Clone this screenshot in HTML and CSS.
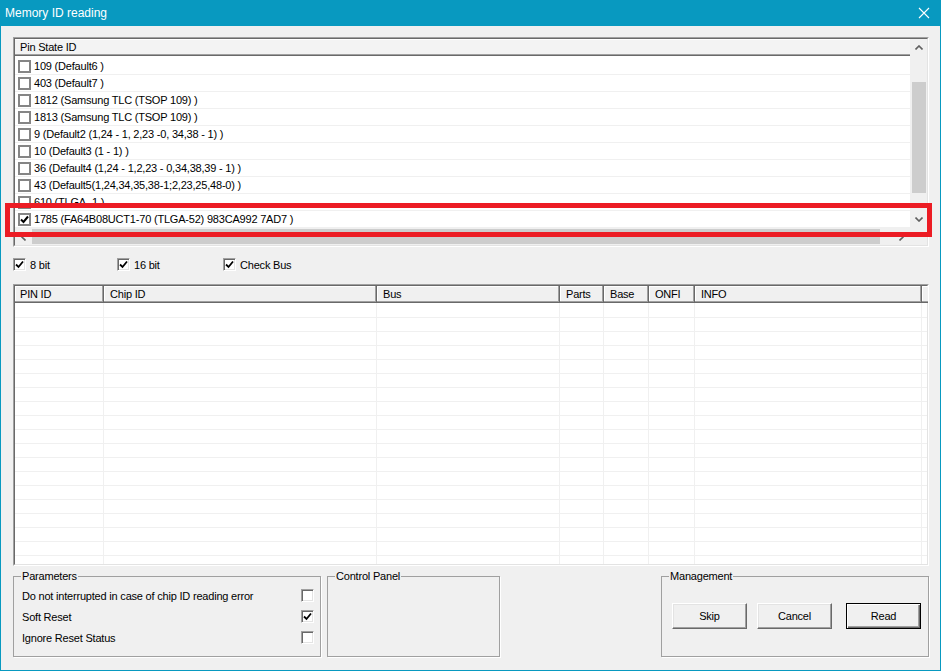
FILE: index.html
```html
<!DOCTYPE html>
<html lang="en">
<head>
    <meta charset="UTF-8">
    <title>Memory ID reading</title>
    <link rel="stylesheet" href="styles.css">
</head>
<body>
<div class="window">
    <div class="titlebar">
        <span class="title">Memory ID reading</span>
        <svg class="close" width="12" height="12" viewBox="0 0 12 12">
            <path d="M1 1 L11 11 M11 1 L1 11" stroke="#fff" stroke-width="1.1" fill="none"/>
        </svg>
    </div>

    <div class="client">
        <!-- pin state list -->
        <div class="sunken listbox">
            <div class="sunken-in list-grid">
                <div class="list-main">
                    <div class="list-head">Pin State ID</div>
                    <div class="row"><span class="lcb"></span>109 (Default6 )</div>
                    <div class="row"><span class="lcb"></span>403 (Default7 )</div>
                    <div class="row"><span class="lcb"></span>1812 (Samsung TLC (TSOP 109) )</div>
                    <div class="row"><span class="lcb"></span>1813 (Samsung TLC (TSOP 109) )</div>
                    <div class="row"><span class="lcb"></span>9 (Default2 (1,24 - 1, 2,23 -0, 34,38 - 1) )</div>
                    <div class="row"><span class="lcb"></span>10 (Default3 (1 - 1) )</div>
                    <div class="row"><span class="lcb"></span>36 (Default4 (1,24 - 1,2,23 - 0,34,38,39 - 1) )</div>
                    <div class="row"><span class="lcb"></span>43 (Default5(1,24,34,35,38-1;2,23,25,48-0) )</div>
                    <div class="row"><span class="lcb"></span>610 (TLGA_1 )</div>
                    <div class="row"><span class="lcb"><svg width="9" height="9" viewBox="0 0 9 9"><path d="M1 4.5 L3.5 7 L8 1.5" stroke="#000" stroke-width="2" fill="none"/></svg></span>1785 (FA64B08UCT1-70 (TLGA-52) 983CA992 7AD7 )</div>
                </div>
                <div class="vscroll">
                    <div class="sbtn"><svg width="8" height="5" viewBox="0 0 8 5"><path d="M0.5 4.5 L4 1 L7.5 4.5" stroke="#606060" stroke-width="1.6" fill="none"/></svg></div>
                    <div class="vtrack"><div class="vthumb"></div></div>
                    <div class="sbtn"><svg width="8" height="5" viewBox="0 0 8 5"><path d="M0.5 0.5 L4 4 L7.5 0.5" stroke="#606060" stroke-width="1.6" fill="none"/></svg></div>
                </div>
                <div class="hscroll">
                    <div class="sbtn hbtn"><svg width="5" height="8" viewBox="0 0 5 8"><path d="M4.5 0.5 L1 4 L4.5 7.5" stroke="#606060" stroke-width="1.6" fill="none"/></svg></div>
                    <div class="htrack"><div class="hthumb"></div></div>
                    <div class="sbtn hbtn"><svg width="5" height="8" viewBox="0 0 5 8"><path d="M0.5 0.5 L4 4 L0.5 7.5" stroke="#606060" stroke-width="1.6" fill="none"/></svg></div>
                </div>
                <div class="corner"></div>
            </div>
        </div>
        <div class="red-mark"></div>

        <!-- bus options -->
        <div class="opts">
            <label class="opt w1"><span class="cb"><svg width="9" height="9" viewBox="0 0 9 9"><path d="M1 4.5 L3.5 7 L8 1.5" stroke="#000" stroke-width="1.8" fill="none"/></svg></span>8 bit</label>
            <label class="opt w2"><span class="cb"><svg width="9" height="9" viewBox="0 0 9 9"><path d="M1 4.5 L3.5 7 L8 1.5" stroke="#000" stroke-width="1.8" fill="none"/></svg></span>16 bit</label>
            <label class="opt"><span class="cb"><svg width="9" height="9" viewBox="0 0 9 9"><path d="M1 4.5 L3.5 7 L8 1.5" stroke="#000" stroke-width="1.8" fill="none"/></svg></span>Check Bus</label>
        </div>

        <!-- result table -->
        <div class="sunken table">
            <div class="sunken-in table-in">
                <div class="thead">
                    <div class="th c1">PIN ID</div>
                    <div class="th c2">Chip ID</div>
                    <div class="th c3">Bus</div>
                    <div class="th c4">Parts</div>
                    <div class="th c5">Base</div>
                    <div class="th c6">ONFI</div>
                    <div class="th c7">INFO</div>
                    <div class="th cf"></div>
                </div>
                <div class="tbody">
                    <div class="tcol c1"></div>
                    <div class="tcol c2"></div>
                    <div class="tcol c3"></div>
                    <div class="tcol c4"></div>
                    <div class="tcol c5"></div>
                    <div class="tcol c6"></div>
                    <div class="tcol c7"></div>
                    <div class="tcol cf"></div>
                </div>
            </div>
        </div>

        <!-- bottom groups -->
        <div class="bottom">
            <fieldset class="grp params">
                <legend>Parameters</legend>
                <div class="prow">Do not interrupted in case of chip ID reading error<span class="cb"></span></div>
                <div class="prow">Soft Reset<span class="cb"><svg width="9" height="9" viewBox="0 0 9 9"><path d="M1 4.5 L3.5 7 L8 1.5" stroke="#000" stroke-width="1.8" fill="none"/></svg></span></div>
                <div class="prow">Ignore Reset Status<span class="cb"></span></div>
            </fieldset>
            <fieldset class="grp control">
                <legend>Control Panel</legend>
            </fieldset>
            <fieldset class="grp manage">
                <legend>Management</legend>
                <div class="btns">
                    <button class="btn">Skip</button>
                    <button class="btn cancel">Cancel</button>
                    <button class="btn def">Read</button>
                </div>
            </fieldset>
        </div>
    </div>
</div>
</body>
</html>
```

FILE: styles.css
```css
*{
    margin: 0;
    padding: 0;
    box-sizing: border-box;
}
body{
    width: 941px;
    height: 671px;
    overflow: hidden;
    background-color: #f0f0f0;
    color: #000;
    font-family: "Liberation Sans", Arial, sans-serif;
    font-size: 11px;
    letter-spacing: -0.2px;
}
.window{
    width: 941px;
    height: 671px;
    display: flex;
    flex-direction: column;
}
.titlebar{
    height: 26px;
    flex: none;
    background-color: #0899c0;
    color: #fff;
    display: flex;
    align-items: center;
    justify-content: space-between;
    padding: 0 11px 0 5px;
    font-size: 12px;
    letter-spacing: 0;
}
.client{
    flex: 1;
    position: relative;
    display: flex;
    flex-direction: column;
    border: 1px solid #0899c0;
    border-top: none;
    padding: 11px 11px 0 12px;
}

/* sunken 3d frame */
.sunken{
    border: 1px solid;
    border-color: #a0a0a0 #fff #fff #a0a0a0;
}
.sunken-in{
    height: 100%;
    border: 1px solid;
    border-color: #696969 #e3e3e3 #e3e3e3 #696969;
    background-color: #fff;
}

/* list */
.listbox{
    height: 210px;
    flex: none;
}
.list-grid{
    display: grid;
    grid-template-columns: 1fr 17px;
    grid-template-rows: 1fr 17px;
}
.list-main{
    overflow: hidden;
}
.list-head{
    height: 19px;
    line-height: 17px;
    padding-left: 5px;
    background-color: #f3f3f3;
    border-bottom: 2px solid #fff;
    box-shadow: inset 0 -1px #696969, inset 0 -2px #a0a0a0, inset 0 1px #fff;
}
.row{
    height: 17px;
    display: flex;
    align-items: center;
    gap: 3px;
    padding-left: 3px;
    border-bottom: 1px solid #f0f0f0;
    white-space: nowrap;
}
.lcb{
    width: 13px;
    height: 13px;
    flex: none;
    border: 2px solid #858585;
    background-color: #fff;
    display: flex;
    align-items: center;
    justify-content: center;
}
.vscroll{
    background-color: #f0f0f0;
    display: flex;
    flex-direction: column;
}
.sbtn{
    height: 17px;
    flex: none;
    display: flex;
    align-items: center;
    justify-content: center;
}
.vtrack{
    flex: 1;
    padding-top: 26px;
}
.vthumb{
    height: 111px;
    margin: 0 1px 0 2px;
    background-color: #cdcdcd;
}
.hscroll{
    background-color: #f0f0f0;
    display: flex;
}
.hbtn{
    width: 17px;
}
.htrack{
    flex: 1;
    padding: 1px 0;
}
.hthumb{
    width: 848px;
    height: 100%;
    background-color: #cdcdcd;
}
.corner{
    background-color: #f0f0f0;
}

/* annotation drawn over the list */
.red-mark{
    position: absolute;
    left: 4px;
    top: 177px;
    width: 927px;
    height: 34px;
    border: 5px solid #ec1c24;
}

/* classic checkbox */
.cb{
    width: 13px;
    height: 13px;
    flex: none;
    border: 1px solid;
    border-color: #a0a0a0 #fff #fff #a0a0a0;
    box-shadow: inset 1px 1px #696969, inset -1px -1px #e3e3e3;
    background-color: #fff;
    display: flex;
    align-items: center;
    justify-content: center;
}
.opts{
    display: flex;
    height: 13px;
    margin-top: 11px;
    flex: none;
}
.opt{
    display: flex;
    align-items: center;
    gap: 4px;
}
.w1{
    width: 104px;
}
.w2{
    width: 106px;
}

/* table */
.table{
    height: 282px;
    margin-top: 13px;
    flex: none;
}
.table-in{
    display: flex;
    flex-direction: column;
}
.thead{
    display: flex;
    height: 17px;
    flex: none;
}
.th{
    height: 17px;
    line-height: 16px;
    padding-left: 6px;
    background-color: #f0f0f0;
    border-right: 1px solid #696969;
    border-bottom: 1px solid #696969;
    box-shadow: inset -1px -1px #a0a0a0, inset 1px 1px #fff;
    white-space: nowrap;
}
.th.c1{
    padding-left: 5px;
}
.th.cf{
    border-right: none;
    box-shadow: inset 0 -1px #a0a0a0, inset 1px 1px #fff;
}
.tbody{
    flex: 1;
    display: flex;
    background-image: repeating-linear-gradient(to bottom, transparent 0, transparent 13px, #f0f0f0 13px, #f0f0f0 14px);
    background-position: 0 1px;
}
.tcol{
    border-right: 1px solid #f0f0f0;
}
.c1{ width: 89px; flex: none; }
.c2{ width: 273px; flex: none; }
.c3{ width: 183px; flex: none; }
.c4{ width: 44px; flex: none; }
.c5{ width: 45px; flex: none; }
.c6{ width: 46px; flex: none; }
.c7{ width: 227px; flex: none; }
.cf{ flex: 1; }
.tcol.cf{
    border-right: none;
}

/* group boxes */
.bottom{
    display: flex;
    height: 87px;
    margin-top: 4px;
    flex: none;
}
.grp{
    border: 1px solid #a0a0a0;
    box-shadow: 1px 1px 0 #fff;
    padding: 0 6px 0 7px;
    min-width: 0;
}
.grp legend{
    padding: 0 1px;
    line-height: 13px;
}
.params{
    width: 308px;
    padding-top: 2px;
}
.prow{
    height: 21px;
    display: flex;
    align-items: center;
    justify-content: space-between;
    padding-left: 1px;
    white-space: nowrap;
}
.control{
    width: 173px;
    margin-left: 6px;
}
.manage{
    width: 268px;
    margin-left: auto;
}
.btns{
    display: flex;
    margin-top: 20px;
    padding-left: 3px;
}
.btn{
    width: 75px;
    height: 26px;
    font-family: "Liberation Sans", Arial, sans-serif;
    font-size: 11px;
    letter-spacing: -0.2px;
    color: #000;
    background-color: #f0f0f0;
    border: 1px solid;
    border-color: #fff #696969 #696969 #fff;
    box-shadow: inset -1px -1px #a0a0a0, inset 1px 1px #e3e3e3;
}
.cancel{
    margin-left: 10px;
}
.def{
    margin-left: 14px;
    border-color: #000;
    box-shadow: inset 1px 1px #fff, inset -1px -1px #696969, inset -2px -2px #a0a0a0;
}
```
